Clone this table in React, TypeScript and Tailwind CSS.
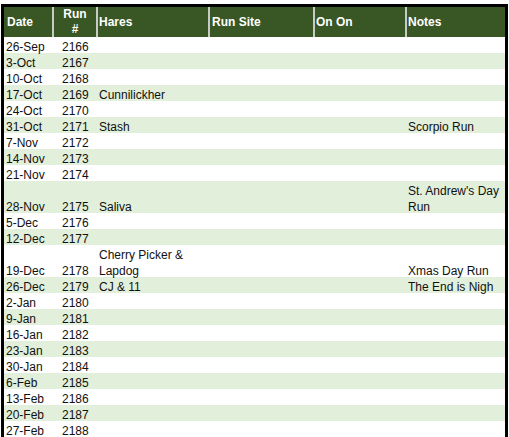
const rows: { date: string; run: string; hares?: string[]; notes?: string[]; tall?: boolean }[] = [
  { date: '26-Sep', run: '2166' },
  { date: '3-Oct', run: '2167' },
  { date: '10-Oct', run: '2168' },
  { date: '17-Oct', run: '2169', hares: ['Cunnilickher'] },
  { date: '24-Oct', run: '2170' },
  { date: '31-Oct', run: '2171', hares: ['Stash'], notes: ['Scorpio Run'] },
  { date: '7-Nov', run: '2172' },
  { date: '14-Nov', run: '2173' },
  { date: '21-Nov', run: '2174' },
  { date: '28-Nov', run: '2175', hares: ['Saliva'], notes: ["St. Andrew's Day", 'Run'], tall: true },
  { date: '5-Dec', run: '2176' },
  { date: '12-Dec', run: '2177' },
  { date: '19-Dec', run: '2178', hares: ['Cherry Picker &', 'Lapdog'], notes: ['Xmas Day Run'], tall: true },
  { date: '26-Dec', run: '2179', hares: ['CJ & 11'], notes: ['The End is Nigh'] },
  { date: '2-Jan', run: '2180' },
  { date: '9-Jan', run: '2181' },
  { date: '16-Jan', run: '2182' },
  { date: '23-Jan', run: '2183' },
  { date: '30-Jan', run: '2184' },
  { date: '6-Feb', run: '2185' },
  { date: '13-Feb', run: '2186' },
  { date: '20-Feb', run: '2187' },
  { date: '27-Feb', run: '2188' },
];

const cols = 'grid grid-cols-[48px_44px_112px_105px_92px_100px]';

function Lines({ lines }: { lines?: string[] }) {
  if (!lines) return null;
  return (
    <>
      {lines.map((l, i) => (
        <div key={i} className="whitespace-nowrap">{l}</div>
      ))}
    </>
  );
}

export default function App() {
  return (
    <div className="bg-white w-[509px] h-[437px] overflow-hidden pt-[4px] pl-[1px] font-['Liberation_Sans',Arial,sans-serif]">
      <div className="w-[507px] border-[3px] border-b-0 border-black">
        {/* header */}
        <div className={`${cols} h-[30px] bg-[#385724] text-white font-bold text-[12px] leading-[15px]`}>
          <div className="flex items-center pl-[3px]">Date</div>
          <div className="flex flex-col items-center justify-center border-l-2 border-[#c8cbc4] text-center">
            <div>Run</div>
            <div>#</div>
          </div>
          <div className="flex items-center pl-[1px] border-l-2 border-[#c8cbc4]">Hares</div>
          <div className="flex items-center pl-[2px] border-l-2 border-[#c8cbc4]">Run Site</div>
          <div className="flex items-center pl-[1px] border-l-2 border-[#c8cbc4]">On On</div>
          <div className="flex items-center pl-[1px] border-l-2 border-[#c8cbc4]">Notes</div>
        </div>
        {/* body */}
        {rows.map((r, i) => (
          <div
            key={r.run}
            className={`${cols} ${r.tall ? 'h-[32px]' : 'h-[16px]'} ${i % 2 ? 'bg-[#e2efda]' : 'bg-white'} text-[12px] leading-[16px] text-[#111]`}
          >
            <div className="flex flex-col justify-end pl-[2px] pt-[2px]">{r.date}</div>
            <div className="flex flex-col justify-end pl-[10px] pt-[2px]">{r.run}</div>
            <div className="flex flex-col justify-end pl-[3px] pt-[2px]">
              <Lines lines={r.hares} />
            </div>
            <div />
            <div />
            <div className="flex flex-col justify-end pl-[3px] pt-[2px]">
              <Lines lines={r.notes} />
            </div>
          </div>
        ))}
      </div>
    </div>
  );
}
